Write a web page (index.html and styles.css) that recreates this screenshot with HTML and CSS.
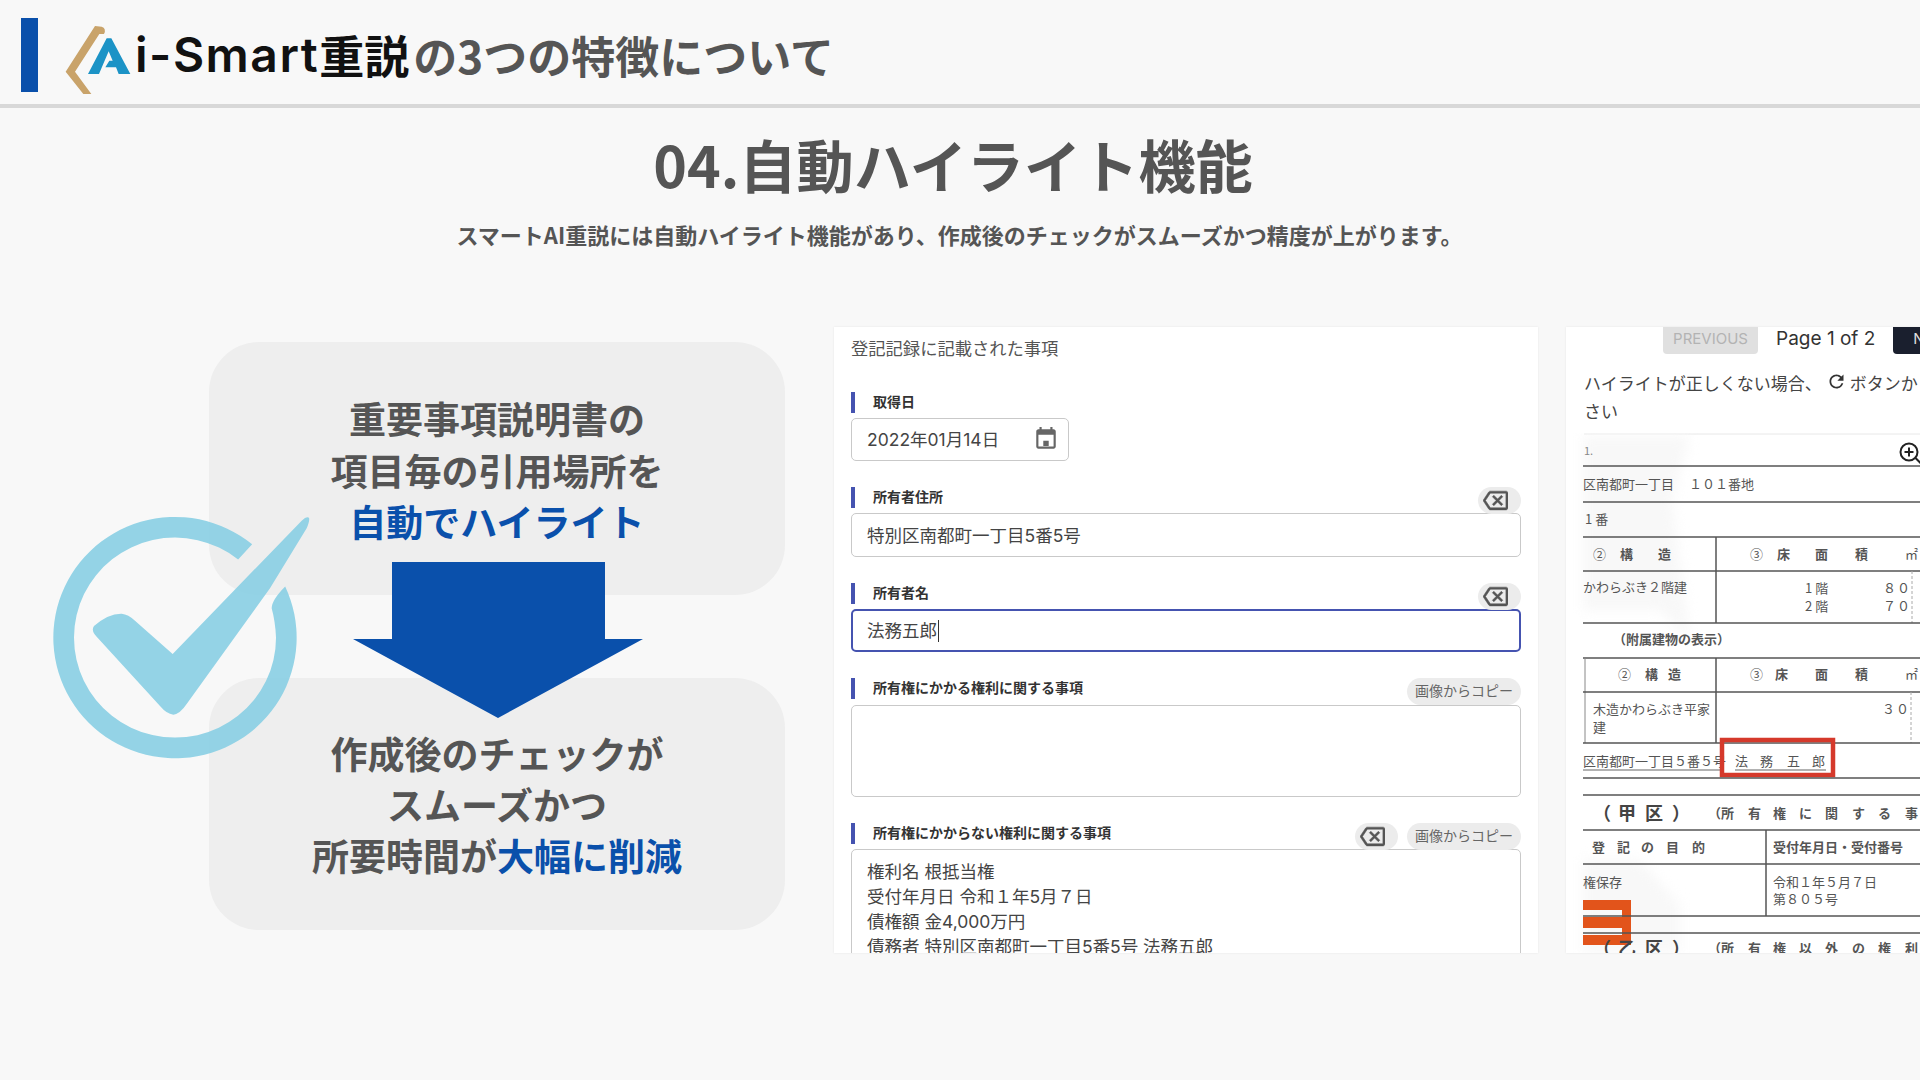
FILE: index.html
```html
<!DOCTYPE html>
<html lang="ja">
<head>
<meta charset="utf-8">
<title>Ai-Smart重説の3つの特徴について</title>
<link rel="stylesheet" href="styles.css">
</head>
<body>
<div class="page">
  <header class="topbar">
    <span class="topbar-mark"></span>
    <svg class="logo" viewBox="0 0 255 270" aria-hidden="true">
      <path class="logo-gold" d="M135 48L155 50Q170 55 162 72L148 72L75 185L124 252L100 252L47 185Z"/>
      <path class="logo-blue" d="M114 192L170 85L184 85L241 192L206 192L198 172L166 172L178 152L188 152L176 124L147 192Z"/>
    </svg>
    <h1 class="topbar-title"><span class="brand-latin">i-Smart</span><span class="brand-jp">重説</span><span class="topbar-rest">の3つの特徴について</span></h1>
  </header>

  <section class="hero">
    <h2 class="hero-title">04.自動ハイライト機能</h2>
    <p class="hero-sub">スマートAI重説には自動ハイライト機能があり、作成後のチェックがスムーズかつ精度が上がります。</p>
  </section>

  <main class="content">
    <section class="summary">
      <div class="summary-card summary-card-top">
        <p>重要事項説明書の<br>項目毎の引用場所を<br><em>自動でハイライト</em></p>
      </div>
      <div class="summary-card summary-card-bottom">
        <p>作成後のチェックが<br>スムーズかつ<br>所要時間が<em>大幅に削減</em></p>
      </div>
      <svg class="summary-arrow" viewBox="0 0 290 156" aria-hidden="true">
        <path d="M39 0H252V77H290L145 156L0 77H39Z"/>
      </svg>
      <svg class="summary-check" viewBox="0 0 870 840" aria-hidden="true">
        <path d="M636.500 133A365 362 0 1 0 735.600 259.500Q695 300 695 325Q706 365 708 413A303 300 0 1 1 594.400 178.700Z"/>
        <path d="M162 378Q205 340 245 341Q265 343 285 362L398 462L785 62Q800 48 807 53Q810 62 800 85L690 265L440 612Q420 642 400 644Q380 642 360 618L170 410Q152 392 162 378Z"/>
      </svg>
    </section>

    <section class="form-panel">
      <div class="panel-title">登記記録に記載された事項</div>

      <div class="field">
        <div class="field-head"><span class="field-label">取得日</span></div>
        <div class="input input-date">
          <span>2022年01月14日</span>
          <svg class="icon-cal" viewBox="0 0 24 24" aria-hidden="true"><path d="M14.5 13.5h-5v5h5v-5zM16 1v2H8V1H6v2H5c-1.11 0-1.99.9-1.99 2L3 19c0 1.1.89 2 2 2h14c1.1 0 2-.9 2-2V5c0-1.100-.9-2-2-2h-1V1h-2zm3 18H5V8h14v11z"/></svg>
        </div>
      </div>

      <div class="field">
        <div class="field-head">
          <span class="field-label">所有者住所</span>
          <div class="field-actions">
            <span class="pill pill-icon"><svg viewBox="0 0 24 24" aria-hidden="true"><path d="M22 3H7c-.69 0-1.23.35-1.59.88L0 12l5.41 8.11c.36.53.9.89 1.59.89h15c1.100 0 2-.9 2-2V5c0-1.100-.9-2-2-2zm0 16H7.070L2.400 12l4.660-7H22v14zm-11.590-2L14 13.410 17.590 17 19 15.590 15.410 12 19 8.410 17.590 7 14 10.590 10.410 7 9 8.410 12.590 12 9 15.590z"/></svg></span>
          </div>
        </div>
        <div class="input">特別区南都町一丁目5番5号</div>
      </div>

      <div class="field">
        <div class="field-head">
          <span class="field-label">所有者名</span>
          <div class="field-actions">
            <span class="pill pill-icon"><svg viewBox="0 0 24 24" aria-hidden="true"><path d="M22 3H7c-.69 0-1.23.35-1.59.88L0 12l5.41 8.11c.36.53.9.89 1.59.89h15c1.100 0 2-.9 2-2V5c0-1.100-.9-2-2-2zm0 16H7.070L2.400 12l4.660-7H22v14zm-11.590-2L14 13.410 17.590 17 19 15.590 15.410 12 19 8.410 17.590 7 14 10.590 10.410 7 9 8.410 12.590 12 9 15.590z"/></svg></span>
          </div>
        </div>
        <div class="input input-focus"><span class="caret-text">法務五郎</span></div>
      </div>

      <div class="field">
        <div class="field-head field-head-tall">
          <span class="field-label">所有権にかかる権利に関する事項</span>
          <div class="field-actions"><span class="pill pill-text">画像からコピー</span></div>
        </div>
        <div class="input input-area"></div>
      </div>

      <div class="field">
        <div class="field-head">
          <span class="field-label">所有権にかからない権利に関する事項</span>
          <div class="field-actions">
            <span class="pill pill-icon"><svg viewBox="0 0 24 24" aria-hidden="true"><path d="M22 3H7c-.69 0-1.23.35-1.59.88L0 12l5.41 8.11c.36.53.9.89 1.59.89h15c1.100 0 2-.9 2-2V5c0-1.100-.9-2-2-2zm0 16H7.070L2.400 12l4.660-7H22v14zm-11.590-2L14 13.410 17.590 17 19 15.590 15.410 12 19 8.410 17.590 7 14 10.590 10.410 7 9 8.410 12.590 12 9 15.590z"/></svg></span>
            <span class="pill pill-text">画像からコピー</span>
          </div>
        </div>
        <div class="input input-long">権利名 根抵当権<br>受付年月日 令和１年5月７日<br>債権額 金4,000万円<br>債務者 特別区南都町一丁目5番5号 法務五郎</div>
      </div>
    </section>

    <section class="doc-panel">
      <div class="pager">
        <span class="pager-btn pager-prev">PREVIOUS</span>
        <span class="pager-label">Page 1 of 2</span>
        <span class="pager-btn pager-next">NEXT</span>
      </div>
      <p class="doc-note">ハイライトが正しくない場合、<svg class="icon-refresh" viewBox="0 0 24 24" aria-hidden="true"><path d="M17.650 6.350A7.958 7.958 0 0 0 12 4c-4.420 0-7.990 3.580-7.990 8s3.570 8 7.990 8c3.730 0 6.840-2.550 7.730-6h-2.080A5.990 5.990 0 0 1 12 18c-3.310 0-6-2.690-6-6s2.690-6 6-6c1.660 0 3.140.69 4.220 1.780L13 11h7V4l-2.350 2.350z"/></svg>ボタンから再度実行してくだ<br>さい</p>

      <svg class="scan" viewBox="1566 433 354 520" role="img">
        <line class="rule-faint" x1="1584" y1="434" x2="1920" y2="434"/>
        <path class="scan-shade" d="M1583 436H1690L1672 500L1690 640L1660 610H1583Z"/>
        <path class="scan-shade" d="M1583 860H1640L1680 905V953H1583Z"/>

        <text class="t-s" x="1584" y="455">1.</text>
        <line class="rule" x1="1583" y1="466" x2="1920" y2="466"/>
        <text class="t" x="1583" y="489">区南都町一丁目</text>
        <text class="t" x="1689" y="489">１０１番地</text>
        <line class="rule" x1="1583" y1="502" x2="1920" y2="502"/>
        <text class="t" x="1585" y="524">1 番</text>
        <line class="rule" x1="1583" y1="537" x2="1920" y2="537"/>
        <line class="rule" x1="1716" y1="537" x2="1716" y2="623"/>
        <text class="t" x="1593" y="559">②</text><text class="t t-b" x="1620" y="559">構</text><text class="t t-b" x="1658" y="559">造</text>
        <text class="t" x="1750" y="559">③</text><text class="t t-b" x="1777" y="559">床</text><text class="t t-b" x="1815" y="559">面</text><text class="t t-b" x="1855" y="559">積</text><text class="t" x="1905" y="559">㎡</text>
        <line class="rule" x1="1583" y1="571" x2="1920" y2="571"/>
        <text class="t" x="1583" y="592">かわらぶき２階建</text>
        <text class="t" x="1805" y="593">1 階</text><text class="t t-w" x="1883" y="593">８０</text>
        <text class="t" x="1805" y="611">2 階</text><text class="t t-w" x="1883" y="611">７０</text>
        <line class="rule-dash" x1="1912" y1="571" x2="1912" y2="623"/>
        <line class="rule" x1="1583" y1="623" x2="1920" y2="623"/>
        <text class="t t-b" x="1613" y="644">（附属建物の表示）</text>

        <line class="rule" x1="1583" y1="658" x2="1920" y2="658"/>
        <line class="rule-thin" x1="1585" y1="658" x2="1585" y2="743"/>
        <line class="rule" x1="1716" y1="658" x2="1716" y2="743"/>
        <text class="t" x="1618" y="679">②</text><text class="t t-b" x="1645" y="679">構</text><text class="t t-b" x="1668" y="679">造</text>
        <text class="t" x="1750" y="679">③</text><text class="t t-b" x="1775" y="679">床</text><text class="t t-b" x="1815" y="679">面</text><text class="t t-b" x="1855" y="679">積</text><text class="t" x="1905" y="679">㎡</text>
        <line class="rule" x1="1583" y1="692" x2="1920" y2="692"/>
        <text class="t" x="1593" y="714">木造かわらぶき平家</text>
        <text class="t" x="1593" y="732">建</text>
        <text class="t t-w" x="1882" y="714">３０</text>
        <line class="rule-dash" x1="1911" y1="692" x2="1911" y2="743"/>
        <line class="rule" x1="1583" y1="743" x2="1920" y2="743"/>

        <text class="t" x="1583" y="766">区南都町一丁目５番５号</text>
        <line class="rule-under" x1="1583" y1="770" x2="1720" y2="770"/>
        <text class="t" x="1735" y="766">法</text><text class="t" x="1760" y="766">務</text><text class="t" x="1787" y="766">五</text><text class="t" x="1812" y="766">郎</text>
        <line class="rule-under" x1="1735" y1="770" x2="1826" y2="770"/>
        <rect class="hl" x="1722" y="740" width="111" height="35"/>
        <line class="rule" x1="1583" y1="778" x2="1920" y2="778"/>

        <line class="rule" x1="1583" y1="795" x2="1920" y2="795"/>
        <text class="t-l" x="1593" y="820">（</text><text class="t-l" x="1618" y="820">甲</text><text class="t-l" x="1645" y="820">区</text><text class="t-l" x="1672" y="820">）</text>
        <text class="t t-b" x="1708" y="818">（所</text><text class="t t-b" x="1748" y="818">有</text><text class="t t-b" x="1773" y="818">権</text><text class="t t-b" x="1799" y="818">に</text><text class="t t-b" x="1825" y="818">関</text><text class="t t-b" x="1852" y="818">す</text><text class="t t-b" x="1878" y="818">る</text><text class="t t-b" x="1905" y="818">事</text>
        <line class="rule" x1="1583" y1="830" x2="1920" y2="830"/>
        <line class="rule" x1="1766" y1="830" x2="1766" y2="916"/>
        <text class="t t-b" x="1592" y="852">登</text><text class="t t-b" x="1617" y="852">記</text><text class="t t-b" x="1641" y="852">の</text><text class="t t-b" x="1666" y="852">目</text><text class="t t-b" x="1692" y="852">的</text>
        <text class="t t-b" x="1773" y="852">受付年月日・受付番号</text>
        <line class="rule" x1="1583" y1="864" x2="1920" y2="864"/>
        <text class="t" x="1583" y="887">権保存</text>
        <text class="t" x="1773" y="887">令和１年５月７日</text>
        <text class="t" x="1773" y="904">第８０５号</text>
        <path class="scan-orange" d="M1583 900H1631V945H1583V935H1622V928H1583V917H1622V910H1583Z"/>
        <line class="rule" x1="1583" y1="916" x2="1920" y2="916"/>
        <line class="rule" x1="1583" y1="933" x2="1920" y2="933"/>
        <text class="t-l" x="1593" y="955">（</text><text class="t-l" x="1618" y="955">乙</text><text class="t-l" x="1645" y="955">区</text><text class="t-l" x="1672" y="955">）</text>
        <text class="t t-b" x="1708" y="953">（所</text><text class="t t-b" x="1748" y="953">有</text><text class="t t-b" x="1773" y="953">権</text><text class="t t-b" x="1799" y="953">以</text><text class="t t-b" x="1825" y="953">外</text><text class="t t-b" x="1852" y="953">の</text><text class="t t-b" x="1878" y="953">権</text><text class="t t-b" x="1905" y="953">利</text>

        <circle class="zoom-ring" cx="1909" cy="452" r="8.500"/>
        <path class="zoom-ring" d="M1909 447.500v9M1904.500 452h9M1915.500 458l6 6"/>
      </svg>
    </section>
  </main>
</div>
</body>
</html>
```

FILE: styles.css
```css
* { box-sizing: border-box; }

html, body {
  margin: 0;
  padding: 0;
  width: 1920px;
  height: 1080px;
  overflow: hidden;
  background: #f8f8f8;
}

body {
  font-family: "Noto Sans CJK JP", "Noto Sans", sans-serif;
  color: #555;
}

.page {
  display: flex;
  flex-direction: column;
  width: 1920px;
  height: 1080px;
  overflow: hidden;
}

/* Header */
.topbar {
  display: flex;
  align-items: center;
  height: 108px;
  padding: 6px 0 0 21px;
  border-bottom: 4px solid #d8d8d8;
  flex: none;
}

.topbar-mark {
  width: 17px;
  height: 74px;
  background: #0a50ab;
  flex: none;
}

.logo {
  width: 85px;
  height: 90px;
  margin-left: 12px;
  flex: none;
}

.logo-gold { fill: #c9a36a; }
.logo-blue { fill: #1c93c6; }

.topbar-title {
  display: flex;
  align-items: center;
  margin: 0;
  font-size: 44px;
  font-weight: 700;
  line-height: 60px;
  white-space: nowrap;
}

.brand-latin {
  font-family: Inter, "Noto Sans", sans-serif;
  font-weight: 600;
  font-size: 48px;
  letter-spacing: 1.500px;
  color: #111;
}

.brand-jp {
  font-size: 45px;
  color: #111;
}

.topbar-rest {
  margin-left: 4px;
  color: #555;
}

/* Hero */
.hero {
  flex: none;
  height: 219px;
  text-align: center;
}

.hero-title {
  margin: 17px 0 0;
  padding-right: 14px;
  font-size: 57.200px;
  line-height: 76px;
  font-weight: 700;
  color: #555;
}

.hero-sub {
  margin: 17px 0 0;
  padding-right: 1px;
  font-size: 22px;
  line-height: 32px;
  font-weight: 700;
  color: #555;
}

/* Content row */
.content {
  display: flex;
  flex: none;
  height: 626px;
}

.summary {
  position: relative;
  display: flex;
  flex-direction: column;
  gap: 83px;
  width: 834px;
  flex: none;
  padding: 15px 49px 0 209px;
}

.summary-card {
  height: 253px;
  border-radius: 50px;
  background: #eeeeee;
  text-align: center;
}

.summary-card-bottom { height: 252px; }

.summary-card p {
  margin: 0;
  font-size: 37px;
  font-weight: 700;
  color: #555;
}

.summary-card-top p { padding-top: 51px; line-height: 51.500px; }
.summary-card-bottom p { padding-top: 50px; line-height: 51px; }

.summary-card em {
  font-style: normal;
  color: #0a50ab;
}

.summary-arrow {
  position: absolute;
  left: 353px;
  top: 235px;
  width: 290px;
  height: 156px;
  fill: #0a50ab;
}

.summary-check {
  position: absolute;
  left: 40px;
  top: 173px;
  width: 290px;
  height: 280px;
  fill: rgb(135, 207, 228);
  opacity: 0.88;
}

/* Form panel */
.form-panel {
  width: 704px;
  height: 626px;
  flex: none;
  overflow: hidden;
  padding: 9px 17px 0 17px;
  background: #fff;
  box-shadow: 0 0 2px rgba(0, 0, 0, 0.08);
  font-family: Inter, "Noto Sans CJK JP", sans-serif;
  color: #444;
}

.panel-title {
  height: 26px;
  margin-bottom: 30px;
  font-size: 17.300px;
  line-height: 26px;
  color: #555;
}

.field { margin-bottom: 26px; }

.field-head {
  display: flex;
  justify-content: space-between;
  align-items: flex-start;
  height: 26px;
}

.field-head-tall { height: 27px; }

.field-label {
  height: 21px;
  padding-left: 18px;
  border-left: 4px solid #4553b0;
  font-size: 14px;
  line-height: 20px;
  font-weight: 700;
  color: #333;
}

.field-actions {
  display: flex;
  gap: 9px;
}

.pill {
  display: flex;
  align-items: center;
  justify-content: center;
  height: 27px;
  border-radius: 14px;
  background: #ececec;
}

.pill-icon { width: 43px; padding-right: 9px; }

.pill-icon svg {
  width: 25px;
  height: 25px;
  fill: #555;
  stroke: #555;
  stroke-width: 0.5;
}

.pill-text {
  width: 114px;
  padding-bottom: 3px;
  font-size: 14px;
  color: #666;
}

.input {
  display: flex;
  align-items: center;
  height: 44px;
  padding: 0 15px 2px;
  border: 1px solid #c9c9c9;
  border-radius: 5px;
  background: #fff;
  font-size: 17.500px;
  color: #444;
}

.input-date {
  justify-content: space-between;
  width: 218px;
  height: 43px;
  padding-right: 9px;
}

.icon-cal {
  width: 26px;
  height: 26px;
  fill: #666;
}

.input-focus {
  height: 43px;
  border: 2px solid #4553b0;
  padding: 0 14px;
}

.caret-text {
  padding-right: 1px;
  border-right: 1px solid #333;
  line-height: 22px;
}

.input-area {
  height: 92px;
}

.input-long {
  display: block;
  height: 160px;
  padding-top: 9px;
  line-height: 25px;
}

/* Document panel */
.doc-panel {
  width: 354px;
  height: 626px;
  margin-left: 28px;
  flex: none;
  overflow: hidden;
  background: #fff;
  box-shadow: 0 0 2px rgba(0, 0, 0, 0.08);
  font-family: Inter, "Noto Sans CJK JP", sans-serif;
}

.pager {
  display: flex;
  align-items: center;
  height: 37px;
  margin-top: -10px;
  padding-left: 97px;
  white-space: nowrap;
}

.pager-btn {
  display: flex;
  align-items: center;
  justify-content: center;
  height: 37px;
  padding-top: 5px;
  border-radius: 4px;
  font-size: 15px;
  flex: none;
}

.pager-prev {
  width: 95px;
  background: #e0e0e0;
  color: #b3b3b3;
}

.pager-label {
  margin-left: 18px;
  width: 117px;
  font-size: 19px;
  padding-top: 5px;
  color: #333;
  flex: none;
}

.pager-next {
  width: 80px;
  background: #1a1f2e;
  color: #ddd;
  flex: none;
}

.doc-note {
  width: 500px;
  margin: 16px 0 0;
  padding-left: 18px;
  font-size: 17px;
  line-height: 28px;
  color: #444;
  white-space: nowrap;
}

.icon-refresh {
  width: 21px;
  height: 21px;
  margin: 0 3px -2px 4px;
  fill: #333;
}

.scan {
  display: block;
  width: 354px;
  height: 520px;
  margin-top: 7px;
}

.rule { stroke: #555; stroke-width: 1.500; }
.rule-thin { stroke: #888; stroke-width: 1; }
.rule-faint { stroke: #e8e8e8; stroke-width: 1; }
.rule-under { stroke: #999; stroke-width: 1.500; }
.rule-dash { stroke: #aaa; stroke-width: 1; stroke-dasharray: 3 2; }
.scan-shade { fill: #f8f8f8; filter: blur(6px); }
.scan-orange { fill: #e2541b; }
.hl { fill: none; stroke: #d5392b; stroke-width: 4.500; }

.t, .t-s, .t-l {
  font-family: "Noto Sans CJK JP", sans-serif;
  fill: #555;
}

.t { font-size: 13px; }
.t-s { font-size: 11px; fill: #888; }
.t-b { font-weight: 700; fill: #555; }
.t-w { letter-spacing: 1px; }
.t-l { font-size: 18px; font-weight: 700; fill: #444; }

.zoom-ring {
  fill: none;
  stroke: #222;
  stroke-width: 2;
}
```
